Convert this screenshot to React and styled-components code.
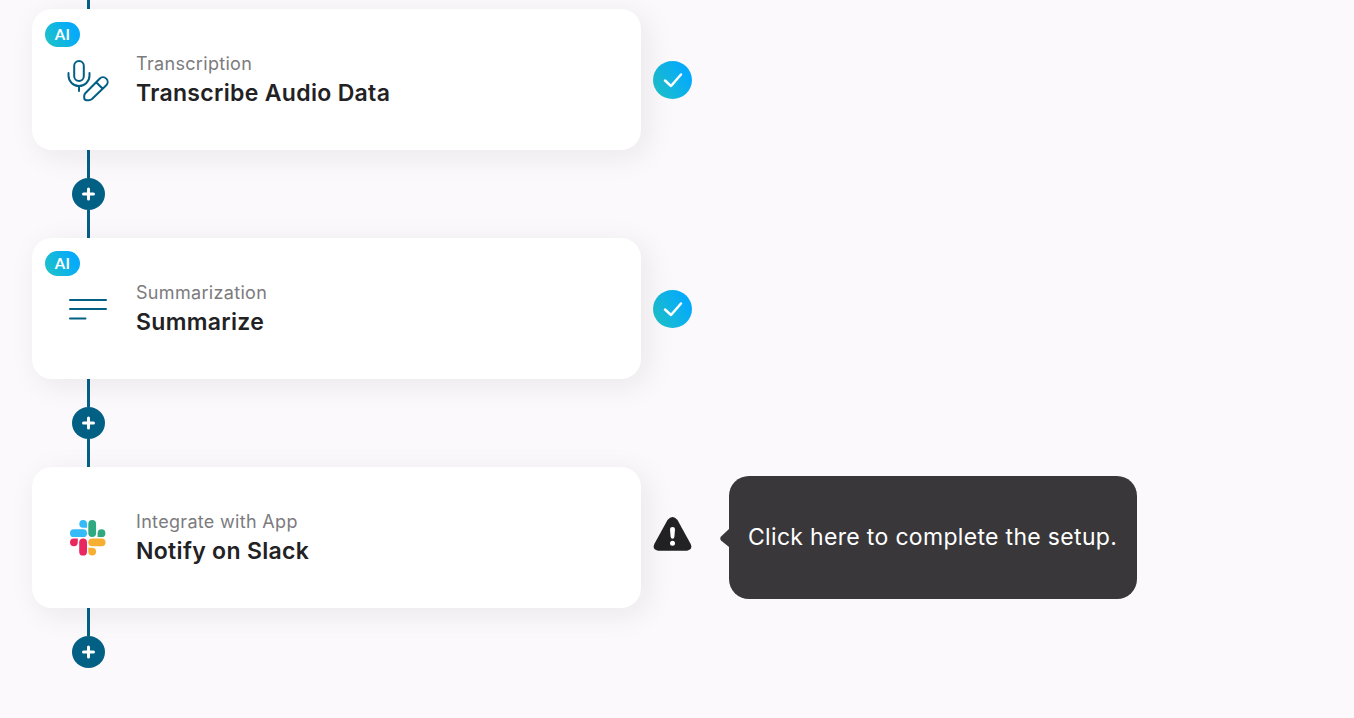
import React from "react";
import styled, { createGlobalStyle } from "styled-components";

const GlobalStyle = createGlobalStyle`
  *, *::before, *::after { box-sizing: border-box; }
  body {
    margin: 0;
    background: #fbf9fc;
    color: #222124;
    font-family: Inter, "Liberation Sans", sans-serif;
    letter-spacing: 0.02em;
  }
`;

const Flow = styled.main`
  display: flex;
  flex-direction: column;
  min-height: 100vh;
  padding: 0 32px 48px;
`;

const Line = styled.span`
  width: 3px;
  height: ${(p) => (p.$short ? 9 : 28)}px;
  background: #036085;
`;

const Connector = styled.div`
  display: flex;
  flex-direction: column;
  align-items: center;
  width: 33px;
  margin-left: 40px;
`;

const AddButton = styled.button`
  display: grid;
  place-items: center;
  width: 33px;
  height: 32px;
  padding: 0;
  border: 0;
  border-radius: 50%;
  background: #036085;
  color: #fff;
  cursor: pointer;
`;

const StepRow = styled.section`
  display: flex;
  align-items: center;
`;

const Card = styled.article`
  position: relative;
  display: flex;
  align-items: center;
  gap: 28px;
  flex: 0 1 609px;
  min-height: 141px;
  padding: 0 36px;
  border-radius: 20px;
  background: #fff;
  box-shadow: 6px 6px 30px rgba(20, 20, 22, 0.08);
`;

const AiBadge = styled.span`
  position: absolute;
  top: 13px;
  left: 13px;
  display: grid;
  place-items: center;
  width: 35px;
  height: 25px;
  border-radius: 13px;
  background: linear-gradient(60deg, #21c4c4, #05aafa 80%);
  color: #fff;
  font-family: Lato, Inter, sans-serif;
  font-size: 15px;
  font-weight: 700;
  line-height: 25px;
`;

const IconSlot = styled.span`
  display: grid;
  place-items: center;
  flex: none;
  width: 40px;
  height: 44px;
`;

const Kind = styled.p`
  margin: 0;
  color: #7c7b7e;
  font-size: 18px;
  line-height: 26px;
`;

const Title = styled.h2`
  margin: 0;
  font-size: 23px;
  font-weight: 600;
  line-height: 32px;
`;

const DoneMark = styled.span`
  display: grid;
  place-items: center;
  flex: none;
  width: 39px;
  height: 38px;
  margin-left: 12px;
  border-radius: 50%;
  background: linear-gradient(60deg, #21c4c4, #05aafa 80%);
`;

const WarningButton = styled.button`
  display: grid;
  place-items: center;
  flex: none;
  width: 39px;
  height: 42px;
  margin-left: 12px;
  padding: 0 0 8px;
  border: 0;
  background: none;
  cursor: pointer;
`;

const Tooltip = styled.div`
  position: relative;
  margin-left: 37px;
  padding: 45px 20px 46px 19px;
  border-radius: 20px;
  background: #3a373a;
  color: #fff;
  font-size: 23px;
  line-height: 32px;
`;

const TooltipArrow = styled.svg`
  position: absolute;
  right: 100%;
  top: 50%;
  margin-top: -10px;
`;

const MicPencilIcon = () => (
  <svg width="40" height="44" viewBox="1 0 40 44" fill="none" overflow="visible" stroke="#036085" strokeWidth="2" strokeLinecap="round" strokeLinejoin="round" aria-hidden="true">
    <rect x="7.2" y="3" width="9.6" height="20" rx="4.8" />
    <path d="M1.5 15v2.5a10.5 10.5 0 0 0 21 0V15M12 28v5" />
    <path d="M18.3 35.2 32.6 20.7a4.7 4.7 0 0 1 6.7 6.6L25 41q-1.4 1.2-3.2 1.2h-2.2q-2.4 0-2.4-2.4v-1.7q0-1.7 1.1-2.9zM29.2 24.2l6.5 6.6" />
  </svg>
);

const LinesIcon = () => (
  <svg width="38" height="24" viewBox="0 0 38 24" fill="none" stroke="#036085" strokeWidth="2" strokeLinecap="round" aria-hidden="true">
    <path d="M1 3h36M1 12h36M1 21.500h15.500" />
  </svg>
);

const SlackIcon = () => (
  <svg width="36" height="36" viewBox="0 0 36 36" aria-hidden="true">
    <g fill="#35bafa">
      <rect x="0" y="9.300" width="17" height="7.800" rx="3.900" />
      <path d="M17 7.700h-3.700A3.850 3.850 0 1 1 17 3.900z" />
    </g>
    <g fill="#2fa981">
      <rect x="18.300" y="0" width="7.800" height="17" rx="3.900" />
      <path d="M27.600 17.100v-3.900a3.900 3.900 0 1 1 3.900 3.900z" />
    </g>
    <g fill="#f7af32">
      <rect x="18.300" y="18.400" width="17.200" height="7.800" rx="3.900" />
      <path d="M18.300 27.700h3.900a3.900 3.900 0 1 1-3.900 3.900z" />
    </g>
    <g fill="#e92860">
      <rect x="9.200" y="18.400" width="7.800" height="17.200" rx="3.900" />
      <path d="M7.800 18.400v3.900a3.900 3.900 0 1 1-3.900-3.900z" />
    </g>
  </svg>
);

const CheckIcon = () => (
  <svg width="20" height="16" viewBox="0 0 20 16" fill="none" stroke="#fff" strokeWidth="2.500" strokeLinecap="round" strokeLinejoin="round" aria-hidden="true">
    <path d="m2 8.500 6 5.500L18 2.500" />
  </svg>
);

const WarningIcon = () => (
  <svg width="39" height="34" viewBox="0 0 39 34" aria-hidden="true">
    <path fill="#222124" d="M14.500 3q5-6 10 0L37.400 26.500q3 6-3.400 7.300H5Q-1.400 32.500 1.600 26.500z" />
    <path fill="#fff" d="M17 12.300q0-2.300 2.500-2.300t2.500 2.300l-.6 7.500q-.2 2-1.900 2t-1.900-2z" />
    <circle cx="19.500" cy="26.300" r="2.500" fill="#fff" />
  </svg>
);

const PlusIcon = () => (
  <svg width="15" height="14" viewBox="0 0 15 14" fill="none" stroke="currentColor" strokeWidth="3" strokeLinecap="round" aria-hidden="true">
    <path d="M7.500 2v10M2.500 7h10" />
  </svg>
);

const steps = [
  { kind: "Transcription", title: "Transcribe Audio Data", Icon: MicPencilIcon, ai: true, done: true },
  { kind: "Summarization", title: "Summarize", Icon: LinesIcon, ai: true, done: true },
  { kind: "Integrate with App", title: "Notify on Slack", Icon: SlackIcon, ai: false, done: false },
];

function Step({ kind, title, Icon, ai, done }) {
  return (
    <StepRow>
      <Card>
        {ai && <AiBadge>AI</AiBadge>}
        <IconSlot><Icon /></IconSlot>
        <div>
          <Kind>{kind}</Kind>
          <Title>{title}</Title>
        </div>
      </Card>
      {done ? (
        <DoneMark role="img" aria-label="Complete"><CheckIcon /></DoneMark>
      ) : (
        <>
          <WarningButton aria-label="Complete the setup" aria-describedby="setup-hint">
            <WarningIcon />
          </WarningButton>
          <Tooltip role="tooltip" id="setup-hint">
            <TooltipArrow width="9" height="20" viewBox="0 0 9 20" aria-hidden="true">
              <path fill="#3a373a" d="M9 1 1 8.500q-1.500 2 0 4L9 19z" />
            </TooltipArrow>
            Click here to complete the setup.
          </Tooltip>
        </>
      )}
    </StepRow>
  );
}

export default function App() {
  return (
    <>
      <GlobalStyle />
      <Flow>
        <Connector><Line $short /></Connector>
        {steps.map((step, i) => (
          <React.Fragment key={step.title}>
            <Step {...step} />
            <Connector>
              <Line />
              <AddButton aria-label="Add step"><PlusIcon /></AddButton>
              {i < steps.length - 1 && <Line />}
            </Connector>
          </React.Fragment>
        ))}
      </Flow>
    </>
  );
}
